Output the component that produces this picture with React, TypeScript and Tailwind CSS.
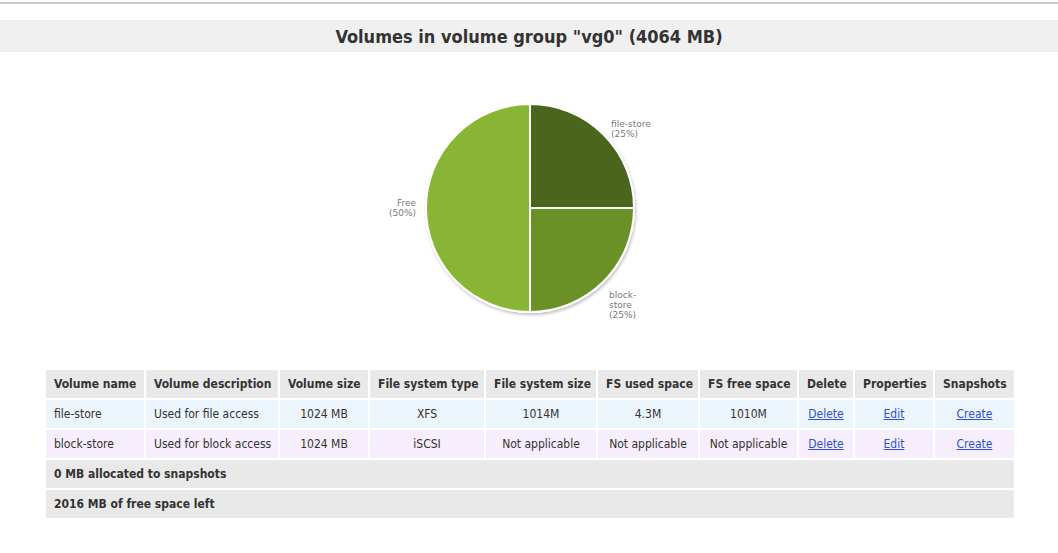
import React from 'react';

type Row = {
  name: string;
  desc: string;
  size: string;
  fsType: string;
  fsSize: string;
  used: string;
  free: string;
};

const rows: Row[] = [
  { name: 'file-store', desc: 'Used for file access', size: '1024 MB', fsType: 'XFS', fsSize: '1014M', used: '4.3M', free: '1010M' },
  { name: 'block-store', desc: 'Used for block access', size: '1024 MB', fsType: 'iSCSI', fsSize: 'Not applicable', used: 'Not applicable', free: 'Not applicable' },
];

const headers = [
  'Volume name',
  'Volume description',
  'Volume size',
  'File system type',
  'File system size',
  'FS used space',
  'FS free space',
  'Delete',
  'Properties',
  'Snapshots',
];

const widths = [98, 132, 88, 114, 110, 100, 97, 54, 78, 79];

function Pie() {
  const cx = 160;
  const cy = 130;
  const r = 104;
  return (
    <svg width="320" height="262" viewBox="0 0 320 262" className="block">
      <defs>
        <filter id="sh" x="-20%" y="-20%" width="140%" height="140%">
          <feDropShadow dx="1" dy="2" stdDeviation="1.5" floodColor="#000" floodOpacity="0.25" />
        </filter>
      </defs>
      <circle cx={cx} cy={cy} r={r + 1} fill="#fff" filter="url(#sh)" />
      {/* Free - left half */}
      <path d={`M${cx},${cy} L${cx},${cy + r} A${r},${r} 0 0 1 ${cx},${cy - r} Z`} fill="#88b533" stroke="#fff" strokeWidth="2" />
      {/* file-store - top right */}
      <path d={`M${cx},${cy} L${cx},${cy - r} A${r},${r} 0 0 1 ${cx + r},${cy} Z`} fill="#4a661c" stroke="#fff" strokeWidth="2" />
      {/* block-store - bottom right */}
      <path d={`M${cx},${cy} L${cx + r},${cy} A${r},${r} 0 0 1 ${cx},${cy + r} Z`} fill="#6a9127" stroke="#fff" strokeWidth="2" />
      <g fontFamily="'DejaVu Sans', sans-serif" fontSize="9" fill="#7a7a7a">
        <text x="241" y="49">file-store</text>
        <text x="241" y="59">(25%)</text>
        <text x="46" y="128" textAnchor="end">Free</text>
        <text x="46" y="138" textAnchor="end">(50%)</text>
        <text x="239" y="220">block-</text>
        <text x="239" y="230">store</text>
        <text x="239" y="240">(25%)</text>
      </g>
    </svg>
  );
}

export default function App() {
  return (
    <div className="w-[1058px] h-[553px] bg-white overflow-hidden text-[#333]" style={{ fontFamily: "'DejaVu Sans Condensed', 'DejaVu Sans', sans-serif" }}>
      <div className="mt-[2px] h-[2px] bg-[#c8c8c8]" />

      {/* Title */}
      <div className="mt-[16px] h-[32px] bg-[#f0f0f0] flex items-center justify-center">
        <h1 className="text-[18px] font-bold text-[#333] font-['DejaVu_Sans_Condensed',sans-serif]">
          Volumes in volume group "vg0" (4064 MB)
        </h1>
      </div>

      {/* Chart */}
      <div className="flex justify-center pt-[26px] h-[316px] pl-[2px]">
        <Pie />
      </div>

      {/* Volumes table */}
      <table className="ml-[44px] w-[972px] table-fixed border-separate border-spacing-[2px] text-[12px]">
        <colgroup>
          {widths.map((w, i) => (
            <col key={i} style={{ width: w }} />
          ))}
        </colgroup>
        <thead>
          <tr className="h-[28px] bg-[#e9e9e9]">
            {headers.map((h, i) => (
              <th key={h} className={`font-bold px-[8px] whitespace-nowrap ${i === 0 ? 'text-left' : 'text-center'}`}>
                {h}
              </th>
            ))}
          </tr>
        </thead>
        <tbody>
          {rows.map((r, i) => (
            <tr key={r.name} className={`h-[28px] ${i === 0 ? 'bg-[#ecf4fc]' : 'bg-[#f6eefc]'}`}>
              <td className="px-[8px] text-left">{r.name}</td>
              <td className="px-[8px] text-left whitespace-nowrap">{r.desc}</td>
              <td className="text-center">{r.size}</td>
              <td className="text-center">{r.fsType}</td>
              <td className="text-center whitespace-nowrap">{r.fsSize}</td>
              <td className="text-center whitespace-nowrap">{r.used}</td>
              <td className="text-center whitespace-nowrap">{r.free}</td>
              <td className="text-center">
                <a href="#" className="text-[#2f52d0] underline">Delete</a>
              </td>
              <td className="text-center">
                <a href="#" className="text-[#2f52d0] underline">Edit</a>
              </td>
              <td className="text-center">
                <a href="#" className="text-[#2f52d0] underline">Create</a>
              </td>
            </tr>
          ))}
          <tr className="h-[28px] bg-[#e9e9e9]">
            <td colSpan={10} className="px-[8px] font-bold">0 MB allocated to snapshots</td>
          </tr>
          <tr className="h-[28px] bg-[#e9e9e9]">
            <td colSpan={10} className="px-[8px] font-bold">2016 MB of free space left</td>
          </tr>
        </tbody>
      </table>
    </div>
  );
}
